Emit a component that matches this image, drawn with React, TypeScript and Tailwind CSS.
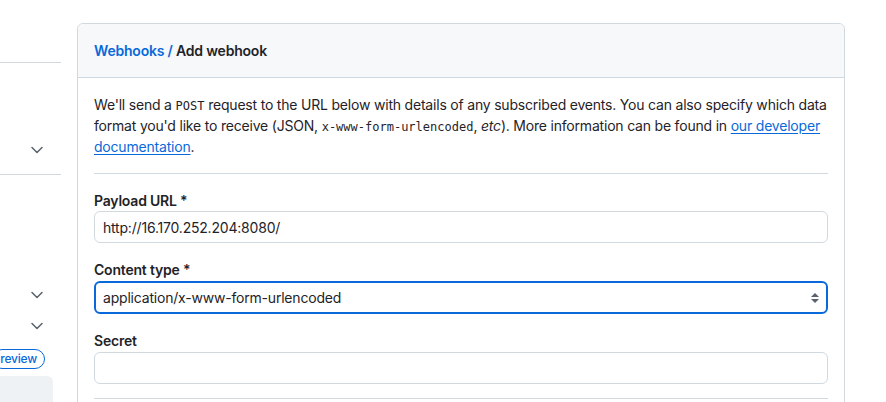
import React from "react";

const Chevron = () => (
  <svg width="12" height="8" viewBox="0 0 12 8" fill="none" className="text-[#59636e]">
    <path d="M1 1.5 6 6.5 11 1.5" stroke="currentColor" strokeWidth="1.5" strokeLinecap="round" strokeLinejoin="round" />
  </svg>
);

const SelectArrows = () => (
  <svg width="8" height="10" viewBox="0 0 8 10" className="text-[#59636e]">
    <path d="M0 4 4 0 8 4Z M0 6 4 10 8 6Z" fill="currentColor" />
  </svg>
);

function Sidebar() {
  return (
    <aside className="w-[61px] shrink-0">
      <div className="h-[63px] border-b border-[#d1d9e0]" />
      <div className="h-[112px] border-b border-[#d1d9e0] flex items-end justify-end pr-[18px] pb-[20px]">
        <Chevron />
      </div>
      <div className="h-[104px]" />
      <div className="h-[31px] flex items-center justify-end pr-[18px]">
        <Chevron />
      </div>
      <div className="h-[31px] flex items-center justify-end pr-[18px]">
        <Chevron />
      </div>
      <div className="h-[35px] flex items-center justify-end pr-[16px]">
        <span className="h-[20px] px-[7px] -ml-4 flex items-center rounded-full border border-[#0969da] text-[12px] font-medium leading-none text-[#0969da]">
          review
        </span>
      </div>
      <div className="mr-[8px] h-[40px] rounded-tr-md rounded-br-md bg-[#eff2f5]" />
    </aside>
  );
}

const mono = "font-['DejaVu_Sans_Mono','Liberation_Mono',monospace] text-[12px] leading-none tracking-normal";

export default function App() {
  return (
    <div className="h-[402px] w-[886px] overflow-hidden bg-white font-['Inter','Liberation_Sans',sans-serif] text-[14px] tracking-[-0.2px] text-[#1f2328]">
      <div className="flex gap-4">
        <Sidebar />
        <div className="mt-[23px] w-[768px] shrink-0 rounded-md border border-[#d1d9e0]">
          {/* Header */}
          <div className="rounded-t-md border-b border-[#d1d9e0] bg-[#f6f8fa] px-4 py-4 leading-[21px] font-semibold">
            <a className="text-[#0969da]">Webhooks</a>
            <span className="text-[#0969da]"> / </span>
            <span>Add webhook</span>
          </div>

          {/* Body */}
          <div className="px-4 pt-4">
            <p className="leading-[21px] pb-4 border-b border-[#d1d9e0]">
              We'll send a <code className={mono}>POST</code> request to the URL below with details of any subscribed
              events. You can also specify which data format you'd like to receive (JSON,{" "}
              <code className={mono}>x-www-form-urlencoded</code>, <em>etc</em>). More information can be found in{" "}
              <a className="text-[#0969da] underline underline-offset-2">our developer documentation</a>.
            </p>

            <div className="mt-[16px]">
              <label className="block font-semibold leading-[21px]">Payload URL *</label>
              <div className="h-[32px] rounded-md border border-[#d1d9e0] px-2 flex items-center">
                http://16.170.252.204:8080/
              </div>
            </div>

            <div className="mt-[16px]">
              <label className="block font-semibold leading-[21px]">Content type *</label>
              <div className="mt-[1px] h-[33px] rounded-md border-2 border-[#0969da] pl-[7px] pr-[7px] flex items-center justify-between">
                <span>application/x-www-form-urlencoded</span>
                <SelectArrows />
              </div>
            </div>

            <div className="mt-[16px]">
              <label className="block font-semibold leading-[21px]">Secret</label>
              <div className="mt-[1px] h-[32px] rounded-md border border-[#d1d9e0]" />
            </div>

            <div className="mt-[14px] border-b border-[#d1d9e0]" />
            <div className="h-[40px]" />
          </div>
        </div>
      </div>
    </div>
  );
}
